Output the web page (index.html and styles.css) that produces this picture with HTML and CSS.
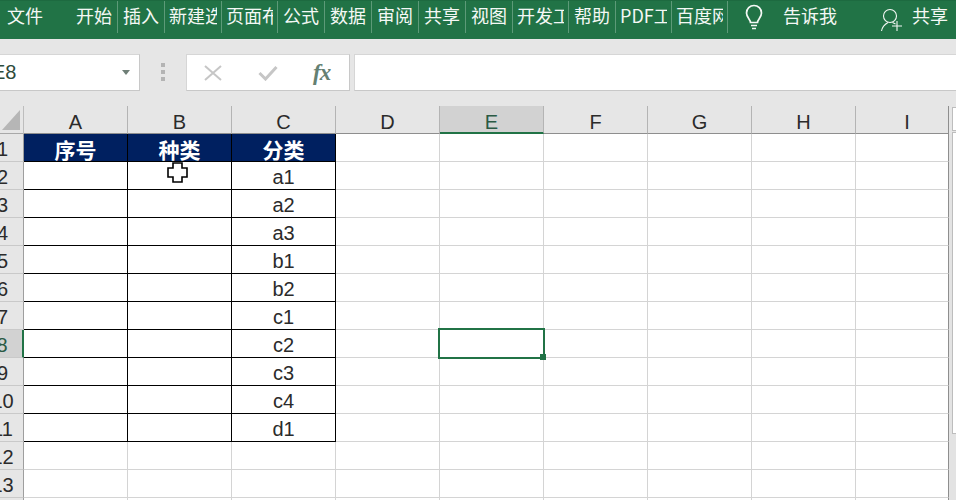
FILE: index.html
```html
<!DOCTYPE html>
<html lang="zh">
<head>
<meta charset="utf-8">
<title>Excel</title>
<link rel="stylesheet" href="styles.css">
</head>
<body>
<div class="app">
  <header class="ribbon">
    <span class="file">文件</span>
    <nav class="tabs">
      <div class="tab w-home"><span>开始</span></div>
      <div class="tab w47"><span>插入</span></div>
      <div class="tab w57"><span>新建选</span></div>
      <div class="tab w56"><span>页面布</span></div>
      <div class="tab w47"><span>公式</span></div>
      <div class="tab w47"><span>数据</span></div>
      <div class="tab w47"><span>审阅</span></div>
      <div class="tab w47"><span>共享</span></div>
      <div class="tab w47"><span>视图</span></div>
      <div class="tab w56"><span>开发工</span></div>
      <div class="tab w47"><span>帮助</span></div>
      <div class="tab w56"><span>PDF工</span></div>
      <div class="tab w56"><span>百度网</span></div>
    </nav>
    <svg class="bulb" viewBox="0 0 20 26" width="20" height="26" aria-hidden="true"><path d="M6.500 18.500c0-3-4-5-4-9.500a7.500 7.500 0 0 1 15 0c0 4.500-4 6.500-4 9.500zM7 21.500h6M8 24.500h4" fill="none" stroke="#f4f8f5" stroke-width="1.700"/></svg>
    <span class="tell">告诉我</span>
    <svg class="user" viewBox="0 0 24 26" width="24" height="26" aria-hidden="true"><circle cx="10" cy="9" r="6.500" fill="none" stroke="#f4f8f5" stroke-width="1.100"/><path d="M1.500 24c.5-3 3-6.500 6.500-8.500M12.500 15.500l3 1.500M17 14v10M12 19h10" fill="none" stroke="#f4f8f5" stroke-width="1.100"/></svg>
    <span class="share">共享</span>
  </header>

  <section class="formula">
    <div class="namebox"><span class="name">E8</span><span class="caret"></span></div>
    <div class="grip"><i></i><i></i><i></i></div>
    <div class="fxbox">
      <svg class="cancel" viewBox="0 0 18 16" width="18" height="16" aria-hidden="true"><path d="M1 1l16 14M17 1L1 15" fill="none" stroke="#c6c6c6" stroke-width="2"/></svg>
      <svg class="enter" viewBox="0 0 20 16" width="20" height="16" aria-hidden="true"><path d="M1.500 8l6 6L18.500 2" fill="none" stroke="#c6c6c6" stroke-width="3"/></svg>
      <span class="fx">fx</span>
    </div>
    <div class="input"><span class="input-caret"></span></div>
  </section>

  <main class="sheet">
    <div class="corner"><span class="tri"></span></div>
    <div class="col-head">A</div><div class="col-head">B</div><div class="col-head">C</div><div class="col-head">D</div>
    <div class="col-head active-col">E</div>
    <div class="col-head">F</div><div class="col-head">G</div><div class="col-head">H</div><div class="col-head last-col">I</div>
    <div class="vbar head-bar"></div>

    <div class="row-head">1</div>
    <div class="cell th">序号</div><div class="cell th">种类</div><div class="cell th">分类</div>
    <div class="cell"></div><div class="cell"></div><div class="cell"></div><div class="cell"></div><div class="cell"></div><div class="cell"></div>
    <div class="vbar"></div>

    <div class="row-head">2</div>
    <div class="cell tb"></div><div class="cell tb"></div><div class="cell tb">a1</div>
    <div class="cell"></div><div class="cell"></div><div class="cell"></div><div class="cell"></div><div class="cell"></div><div class="cell"></div>
    <div class="vbar"></div>

    <div class="row-head">3</div>
    <div class="cell tb"></div><div class="cell tb"></div><div class="cell tb">a2</div>
    <div class="cell"></div><div class="cell"></div><div class="cell"></div><div class="cell"></div><div class="cell"></div><div class="cell"></div>
    <div class="vbar"></div>

    <div class="row-head">4</div>
    <div class="cell tb"></div><div class="cell tb"></div><div class="cell tb">a3</div>
    <div class="cell"></div><div class="cell"></div><div class="cell"></div><div class="cell"></div><div class="cell"></div><div class="cell"></div>
    <div class="vbar"></div>

    <div class="row-head">5</div>
    <div class="cell tb"></div><div class="cell tb"></div><div class="cell tb">b1</div>
    <div class="cell"></div><div class="cell"></div><div class="cell"></div><div class="cell"></div><div class="cell"></div><div class="cell"></div>
    <div class="vbar"></div>

    <div class="row-head">6</div>
    <div class="cell tb"></div><div class="cell tb"></div><div class="cell tb">b2</div>
    <div class="cell"></div><div class="cell"></div><div class="cell"></div><div class="cell"></div><div class="cell"></div><div class="cell"></div>
    <div class="vbar"></div>

    <div class="row-head">7</div>
    <div class="cell tb"></div><div class="cell tb"></div><div class="cell tb">c1</div>
    <div class="cell"></div><div class="cell"></div><div class="cell"></div><div class="cell"></div><div class="cell"></div><div class="cell"></div>
    <div class="vbar"></div>

    <div class="row-head active-row">8</div>
    <div class="cell tb"></div><div class="cell tb"></div><div class="cell tb">c2</div>
    <div class="cell"></div><div class="cell selected"></div><div class="cell"></div><div class="cell"></div><div class="cell"></div><div class="cell"></div>
    <div class="vbar"></div>

    <div class="row-head">9</div>
    <div class="cell tb"></div><div class="cell tb"></div><div class="cell tb">c3</div>
    <div class="cell"></div><div class="cell"></div><div class="cell"></div><div class="cell"></div><div class="cell"></div><div class="cell"></div>
    <div class="vbar"></div>

    <div class="row-head">10</div>
    <div class="cell tb"></div><div class="cell tb"></div><div class="cell tb">c4</div>
    <div class="cell"></div><div class="cell"></div><div class="cell"></div><div class="cell"></div><div class="cell"></div><div class="cell"></div>
    <div class="vbar"></div>

    <div class="row-head">11</div>
    <div class="cell tb"></div><div class="cell tb"></div><div class="cell tb">d1</div>
    <div class="cell"></div><div class="cell"></div><div class="cell"></div><div class="cell"></div><div class="cell"></div><div class="cell"></div>
    <div class="vbar"></div>

    <div class="row-head">12</div>
    <div class="cell"></div><div class="cell"></div><div class="cell"></div>
    <div class="cell"></div><div class="cell"></div><div class="cell"></div><div class="cell"></div><div class="cell"></div><div class="cell"></div>
    <div class="vbar"></div>

    <div class="row-head">13</div>
    <div class="cell"></div><div class="cell"></div><div class="cell"></div>
    <div class="cell"></div><div class="cell"></div><div class="cell"></div><div class="cell"></div><div class="cell"></div><div class="cell"></div>
    <div class="vbar"></div>

    <div class="row-head"></div>
    <div class="cell"></div><div class="cell"></div><div class="cell"></div>
    <div class="cell"></div><div class="cell"></div><div class="cell"></div><div class="cell"></div><div class="cell"></div><div class="cell"></div>
    <div class="vbar"></div>

    <span class="scroll-up"></span>
    <span class="thumb"></span>
    <svg class="cursor" viewBox="0 0 21 21" width="21" height="21" aria-hidden="true"><path d="M6 1h9v5h5v9h-5v5H6v-5H1V6h5z" fill="#fff" stroke="#000" stroke-width="1.600"/></svg>
  </main>
</div>
</body>
</html>
```

FILE: styles.css
```css
* { box-sizing: border-box; }
html, body { margin: 0; padding: 0; }
body {
  width: 956px;
  height: 500px;
  overflow: hidden;
  background: #e6e6e6;
  font-family: "Liberation Sans", "Noto Sans CJK SC", sans-serif;
}
.app { width: 956px; height: 500px; overflow: hidden; display: flex; flex-direction: column; }

/* ribbon */
.ribbon {
  height: 39px;
  flex: none;
  background: #217346;
  border-top: 1px solid #1d6a40;
  color: #f4f8f5;
  display: flex;
  align-items: flex-start;
  font-size: 18px;
  line-height: 29px;
  font-family: "Noto Sans CJK SC", "Liberation Sans", sans-serif;
  white-space: nowrap;
}
.file { width: 76px; padding-left: 7px; flex: none; }
.tabs { display: flex; height: 32px; flex: none; }
.tab {
  flex: none;
  height: 32px;
  padding: 0 4px;
  border-right: 1px solid #5d9a78;
}
.tab span { display: block; overflow: hidden; height: 32px; }
.w-home { width: 42px; padding: 0; }
.w47 { width: 47px; padding: 0 5px; }
.w57 { width: 57px; padding: 0 4px; }
.w56 { width: 56px; padding: 0 4px; }
.bulb { margin-left: 16px; margin-top: 3px; flex: none; }
.tell { margin-left: 19px; flex: none; }
.user { margin-left: 43px; margin-top: 6px; flex: none; }
.share { margin-left: 8px; flex: none; }

/* formula bar */
.formula {
  height: 67px;
  flex: none;
  display: flex;
  padding-top: 15px;
  align-items: flex-start;
}
.namebox, .fxbox, .input {
  height: 37px;
  background: #fff;
  border-bottom: 1px solid #c8c8c8;
  border-right: 1px solid #c8c8c8;
  border-top: 1px solid #d6d6d6;
}
.namebox {
  width: 141px;
  flex: none;
  margin-left: -1px;
  display: flex;
  align-items: center;
  justify-content: space-between;
  padding-right: 9px;
}
.name { font-size: 20px; color: #2d4a3c; margin-left: -7px; }
.caret { width: 0; height: 0; border-left: 4px solid transparent; border-right: 4px solid transparent; border-top: 5px solid #6f7f77; }
.grip { width: 46px; flex: none; display: flex; flex-direction: column; align-items: center; gap: 3px; padding-top: 9px; }
.grip i { width: 4px; height: 4px; background: #b4b4b4; }
.fxbox {
  width: 164px;
  flex: none;
  display: flex;
  align-items: center;
  border-left: 1px solid #d6d6d6;
  padding-left: 17px;
}
.cancel { flex: none; }
.enter { flex: none; margin-left: 36px; }
.fx {
  margin-left: 35px;
  font-family: "Liberation Serif", serif;
  font-style: italic;
  font-weight: 700;
  font-size: 23px;
  color: #648072;
  letter-spacing: -1px;
}
.input { width: 610px; flex: none; margin-left: 4px; border-left: 1px solid #d6d6d6; display: flex; align-items: center; justify-content: flex-end; }
.input-caret { width: 0; height: 0; border-left: 4px solid transparent; border-right: 4px solid transparent; border-top: 5px solid #6f7f77; margin-right: -4px; }

/* sheet */
.sheet {
  position: relative;
  flex: 1;
  width: 974px;
  margin-left: -18px;
  display: grid;
  grid-template-columns: 42px repeat(8, 104px) 93px 7px;
  grid-template-rows: 28px repeat(14, 28px);
  overflow: hidden;
  background: #fff;
  font-size: 20px;
  line-height: 30px;
  color: #2b2b2b;
}
.corner {
  background: #e6e6e6;
  border-right: 1px solid #bdbdbd;
  border-bottom: 1px solid #a8a8a8;
  position: relative;
}
.tri {
  position: absolute;
  right: 3px;
  bottom: 3px;
  width: 0;
  height: 0;
  border-left: 18px solid transparent;
  border-bottom: 20px solid #b6b6b6;
}
.col-head {
  background: #e6e6e6;
  border-right: 1px solid #b4b4b4;
  border-bottom: 1px solid #8e8e8e;
  text-align: center;
  line-height: 32px;
}
.active-col {
  background: #d2d2d2;
  border-bottom: 2px solid #217346;
  color: #2a5a44;
}
.last-col { border-right: 1px solid #8e8e8e; padding-left: 10px; }
.row-head {
  background: #e6e6e6;
  border-right: 1px solid #9e9e9e;
  border-bottom: 1px solid #c9c9c9;
  text-align: center;
}
.active-row { background: #d2d2d2; border-right: 2px solid #217346; color: #2a5a44; }
.cell {
  background: #fff;
  border-right: 1px solid #d4d4d4;
  border-bottom: 1px solid #d4d4d4;
  text-align: center;
}
.cell:nth-child(11n + 10) { border-right-color: #8e8e8e; }
.th {
  background: #002060;
  color: #fff;
  font-family: "Noto Sans CJK SC", sans-serif;
  font-weight: 700;
  font-size: 21px;
  line-height: 30px;
  border-right: 1px solid #000;
  border-bottom: 1px solid #000;
}
.tb { border-right: 1px solid #000; border-bottom: 1px solid #000; }
.selected { position: relative; z-index: 2; }
.selected::before {
  content: "";
  position: absolute;
  inset: -2px;
  border: 2px solid #217346;
}
.selected::after {
  content: "";
  position: absolute;
  right: -3px;
  bottom: -3px;
  width: 6px;
  height: 6px;
  background: #217346;
}
.vbar { background: #e3e3e3; }
.head-bar { background: #e6e6e6; }
.scroll-up {
  position: absolute;
  left: 970px;
  top: 1px;
  width: 20px;
  height: 24px;
  background: #fff;
  border: 1px solid #bdbdbd;
}
.thumb {
  position: absolute;
  left: 970px;
  top: 26px;
  width: 20px;
  height: 302px;
  background: #fff;
  border: 1px solid #bdbdbd;
}
.cursor { position: absolute; left: 185px; top: 56px; z-index: 3; }
```
